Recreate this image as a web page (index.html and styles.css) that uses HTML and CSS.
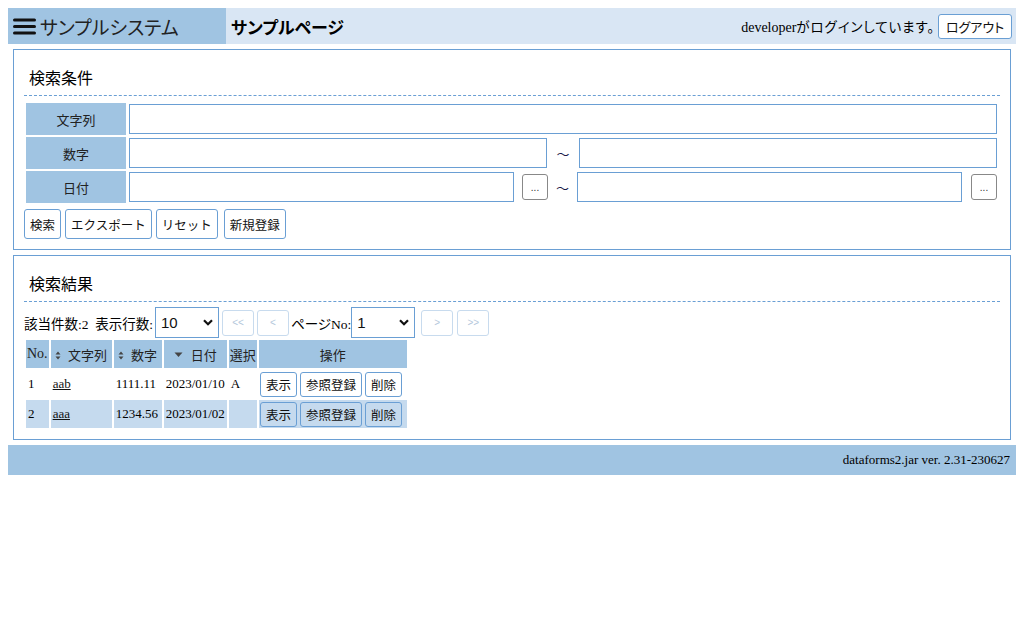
FILE: index.html
```html
<!DOCTYPE html>
<html lang="ja">
<head>
<meta charset="utf-8">
<title>サンプルページ</title>
<link rel="stylesheet" href="styles.css">
</head>
<body>
<header class="topbar">
  <div class="sysname">
    <svg class="burger" width="23" height="17" viewBox="0 0 23 17"><g stroke="#111" stroke-width="3" stroke-linecap="round"><line x1="1.5" y1="2" x2="21.5" y2="2"/><line x1="1.5" y1="8.5" x2="21.5" y2="8.5"/><line x1="1.5" y1="15" x2="21.5" y2="15"/></g></svg>
    <span class="systitle">サンプルシステム</span>
  </div>
  <div class="pagebar">
    <span class="pagetitle">サンプルページ</span>
    <div class="login"><span class="who">developer<span class="jp">がログインしています。</span></span><button class="btn logout">ログアウト</button></div>
  </div>
</header>

<section class="panel">
  <div class="ptitle">検索条件</div>
  <table class="qform">
    <tr><th>文字列</th><td><input class="fld" type="text"></td></tr>
    <tr><th>数字</th><td><div class="range"><input class="fld" type="text"><span class="tilde">～</span><input class="fld" type="text"></div></td></tr>
    <tr><th>日付</th><td><div class="range"><input class="fld" type="text"><button class="pick">...</button><span class="tilde date">～</span><input class="fld" type="text"><button class="pick">...</button></div></td></tr>
  </table>
  <div class="actions">
    <button class="btn">検索</button><button class="btn">エクスポート</button><button class="btn">リセット</button><button class="btn wide">新規登録</button>
  </div>
</section>

<section class="panel results">
  <div class="ptitle">検索結果</div>
  <div class="pager">
    <span class="ptext">該当件数:2&nbsp; 表示行数:</span>
    <span class="selwrap"><select class="sel"><option>10</option></select><svg class="chev" width="10" height="7" viewBox="0 0 10 7"><path d="M1 1.2 L5 5.2 L9 1.2" fill="none" stroke="#111" stroke-width="2.2"/></svg></span>
    <button class="nav" disabled>&lt;&lt;</button>
    <button class="nav" disabled>&lt;</button>
    <span class="ptext pno">ページNo:</span>
    <span class="selwrap"><select class="sel"><option>1</option></select><svg class="chev" width="10" height="7" viewBox="0 0 10 7"><path d="M1 1.2 L5 5.2 L9 1.2" fill="none" stroke="#111" stroke-width="2.2"/></svg></span>
    <button class="nav gapl" disabled>&gt;</button>
    <button class="nav gapr" disabled>&gt;&gt;</button>
  </div>
  <table class="result">
    <tr>
      <th class="c-no">No.</th>
      <th class="c-str"><svg class="sort" width="6" height="9" viewBox="0 0 6 9"><path d="M3 0.5 L5.5 3.5 L0.5 3.5 Z M3 8.5 L5.5 5.5 L0.5 5.5 Z" fill="#444"/></svg>文字列</th>
      <th class="c-num"><svg class="sort" width="6" height="9" viewBox="0 0 6 9"><path d="M3 0.5 L5.5 3.5 L0.5 3.5 Z M3 8.5 L5.5 5.5 L0.5 5.5 Z" fill="#444"/></svg>数字</th>
      <th class="c-date"><svg class="sort down" width="9" height="6" viewBox="0 0 9 6"><path d="M0.5 0.5 L8.5 0.5 L4.5 5 Z" fill="#444"/></svg>日付</th>
      <th class="c-sel">選択</th>
      <th class="c-op">操作</th>
    </tr>
    <tr>
      <td>1</td><td><a href="#">aab</a></td><td>1111.11</td><td>2023/01/10</td><td>A</td>
      <td class="ops"><button class="btn sm">表示</button><button class="btn sm">参照登録</button><button class="btn sm">削除</button></td>
    </tr>
    <tr class="alt">
      <td>2</td><td><a href="#">aaa</a></td><td>1234.56</td><td>2023/01/02</td><td></td>
      <td class="ops"><button class="btn sm">表示</button><button class="btn sm">参照登録</button><button class="btn sm">削除</button></td>
    </tr>
  </table>
</section>

<footer class="foot">dataforms2.jar ver. 2.31-230627</footer>
</body>
</html>
```

FILE: styles.css
```css
* { box-sizing: border-box; }
body {
  margin: 8px;
  font-family: "Liberation Serif", "Noto Sans CJK JP", serif;
  font-size: 13px;
  color: #000;
}
button, input, select {
  font-family: "Liberation Sans", "Noto Sans CJK JP", sans-serif;
}

.topbar { display: flex; height: 36px; }
.sysname {
  width: 218px;
  background: #a0c4e2;
  display: flex;
  align-items: center;
  padding-left: 5px;
}
.burger { margin-right: 4px; margin-top: 1px; }
.systitle {
  font-family: "Noto Sans CJK JP", sans-serif;
  font-feature-settings: "palt";
  font-size: 19px;
  color: #222;
}
.pagebar {
  flex: 1;
  background: #d9e6f4;
  display: flex;
  align-items: center;
  justify-content: space-between;
  padding: 0 4px 0 5px;
}
.pagetitle {
  font-family: "Noto Sans CJK JP", sans-serif;
  font-feature-settings: "palt";
  font-weight: bold;
  font-size: 17px;
}
.login { display: flex; align-items: center; }
.who { margin-right: 3px; font-size: 14px; }
.who .jp { font-feature-settings: "palt"; font-size: 13.5px; letter-spacing: 0.9px; }

.btn {
  height: 30px;
  padding: 0 5px;
  border: 1px solid #6a9fd4;
  border-radius: 3px;
  background: transparent;
  font-size: 12.5px;
  color: #111;
  margin-right: 4px;
}
.logout { height: 25px; width: 74px; background: #fff; margin-right: 0; padding: 0 4px; font-size: 13px; font-feature-settings: "palt"; }
.btn.wide { margin-left: 2px; }

.panel {
  margin: 5px 5px 0;
  border: 1px solid #6a9fd4;
  padding: 0 10px 10px;
}
.panel.results { padding-bottom: 9px; }
.ptitle {
  font-family: "Noto Sans CJK JP", sans-serif;
  font-size: 16px;
  line-height: 22px;
  padding: 16px 5px 7px;
  border-bottom: 1px dashed #6a9fd4;
}

.qform {
  width: 100%;
  border-spacing: 2px;
  margin-top: 5px;
}
.qform th {
  width: 100px;
  height: 32px;
  background: #a0c4e2;
  font-family: "Noto Sans CJK JP", sans-serif;
  font-weight: normal;
  font-size: 13px;
  color: #222;
  padding: 0;
}
.qform td { padding: 1px; }
.fld {
  display: block;
  width: 100%;
  height: 30px;
  border: 1px solid #6a9fd4;
  background: #fff;
  outline: none;
}
.range { display: flex; align-items: center; }
.range .fld { flex: 1; min-width: 0; }
.tilde {
  width: 32px;
  text-align: center;
  font-family: "Noto Sans CJK JP", sans-serif;
  font-size: 13px;
  color: #1a1a4a;
}
.tilde.date { width: 29px; }
.pick {
  width: 26px;
  height: 26px;
  margin-left: 8px;
  border: 1px solid #888;
  border-radius: 3px;
  background: #fff;
  font-size: 10px;
  padding: 0;
  color: #333;
}
.range .pick:last-child { margin-left: 9px; }

.actions { margin-top: 4px; display: flex; }

.pager {
  margin-top: 5px;
  height: 31px;
  display: flex;
  align-items: center;
}
.ptext {
  font-size: 13.5px;
  font-feature-settings: "palt";
  margin-right: 2px;
}
.pno { margin-left: 2px; margin-right: 0; }
.selwrap { position: relative; display: inline-block; }
.sel {
  appearance: none;
  -webkit-appearance: none;
  width: 64px;
  height: 31px;
  border: 1px solid #6a9fd4;
  background: #fff;
  font-size: 15px;
  padding: 0 0 0 5px;
  color: #111;
  border-radius: 0;
  display: block;
}
.chev { position: absolute; right: 6px; top: 12px; pointer-events: none; }
.nav {
  width: 32px;
  height: 26px;
  margin-left: 3px;
  border: 1px solid #c8dbee;
  border-radius: 3px;
  background: #fff;
  color: #b4c8dc;
  font-size: 10px;
  padding: 0;
}
.nav.gapl { margin-left: 6px; }
.nav.gapr { margin-left: 4px; }

.result { border-spacing: 2px; }
.result th {
  height: 28px;
  background: #a0c4e2;
  font-family: "Noto Sans CJK JP", sans-serif;
  font-weight: normal;
  font-size: 13px;
  color: #222;
  padding: 0 1px;
  white-space: nowrap;
}
.result th.c-no { font-family: "Liberation Serif", serif; font-size: 14px; width: 22px; text-align: left; }
.c-str { width: 61px; }
.c-num { width: 48px; }
.c-date { width: 63px; }
.c-sel { width: 28px; }
.c-op { width: 148px; }
.sort { margin-right: 7px; vertical-align: 0; }
.sort.down { margin-right: 8px; vertical-align: 2px; }
.result td {
  height: 28px;
  padding: 0 2px;
  font-size: 13px;
  white-space: nowrap;
}
.result tr.alt td { background: #c5daee; }
.result a { color: #111; }
.result td.ops { padding: 0 0 0 1px; }
.btn.sm { height: 25px; padding: 0 5px; margin-right: 3px; font-size: 12.5px; }
.btn.sm:last-child { margin-right: 0; }

.foot {
  margin-top: 5px;
  height: 30px;
  background: #a0c4e2;
  display: flex;
  align-items: center;
  justify-content: flex-end;
  padding-right: 6px;
  font-size: 13px;
}
```
